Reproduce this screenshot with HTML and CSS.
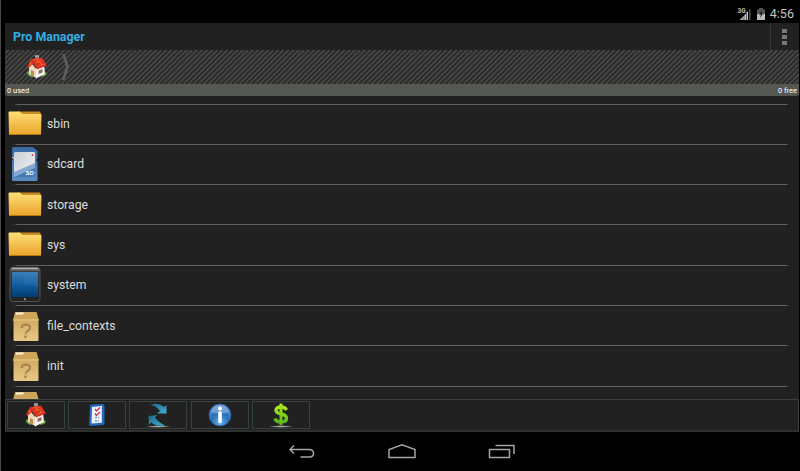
FILE: index.html
```html
<!DOCTYPE html>
<html lang="en">
<head>
<meta charset="utf-8">
<title>Pro Manager</title>
<link rel="stylesheet" href="styles.css">
</head>
<body>
<svg class="defs" aria-hidden="true">
  <defs>
    <linearGradient id="gFolder" x1="0" y1="0" x2="0" y2="1"><stop offset="0" stop-color="#ffdf78"/><stop offset="1" stop-color="#eba52b"/></linearGradient>
    <linearGradient id="gFrame" x1="0" y1="0" x2="0" y2="1"><stop offset="0" stop-color="#a8a8a8"/><stop offset=".12" stop-color="#3a3c3e"/><stop offset="1" stop-color="#222"/></linearGradient>
    <linearGradient id="gScreen" x1="0" y1="0" x2="0" y2="1"><stop offset="0" stop-color="#3b7fb9"/><stop offset=".6" stop-color="#0a5799"/><stop offset="1" stop-color="#043a70"/></linearGradient>
    <linearGradient id="gBox" x1="0" y1="0" x2="0" y2="1"><stop offset="0" stop-color="#d2ac60"/><stop offset="1" stop-color="#e6c886"/></linearGradient>
    <linearGradient id="gCard" x1="0" y1="0" x2="0" y2="1"><stop offset="0" stop-color="#3a6aa6"/><stop offset="1" stop-color="#5b8cc4"/></linearGradient>
    <linearGradient id="gLabel" x1="0" y1="0" x2="1" y2="1"><stop offset="0" stop-color="#c9d0d6"/><stop offset="1" stop-color="#f4f4f4"/></linearGradient>
    <linearGradient id="gSync" x1="0" y1="0" x2="1" y2="1"><stop offset="0" stop-color="#1c6688"/><stop offset="1" stop-color="#43aed6"/></linearGradient>
    <linearGradient id="gDollar" x1="0" y1="0" x2="0" y2="1"><stop offset="0" stop-color="#b0e81c"/><stop offset="1" stop-color="#57b81e"/></linearGradient>
    <radialGradient id="gInfo" cx=".5" cy=".85" r=".8"><stop offset="0" stop-color="#6ab4ee"/><stop offset=".5" stop-color="#2a6fba"/><stop offset="1" stop-color="#5b8ecb"/></radialGradient>
    <radialGradient id="gShade"><stop offset="0" stop-color="#b5b5b5"/><stop offset=".6" stop-color="#808080"/><stop offset="1" stop-color="#444" stop-opacity=".3"/></radialGradient>
  </defs>
  <symbol id="folder" viewBox="0 0 34 26">
    <path d="M12 1.500H32L33 4V25H1V3Z" fill="#c98c20"/>
    <path d="M.5 2.500Q.5 1.500 1.500 1.500H11.500L14.500 4H32.500Q33.500 4 33.500 5L33 24.500H1Z" fill="url(#gFolder)"/>
    <path d="M1 24.500H33" stroke="#b67813"/>
  </symbol>
  <symbol id="tablet" viewBox="0 0 32 35">
    <rect x="1" y=".5" width="30" height="34" rx="3" fill="url(#gFrame)" stroke="#555"/>
    <rect x="3" y="5" width="26" height="25" fill="url(#gScreen)"/>
    <path d="M17 5H29V19L14 18Z" fill="#4385ba" opacity=".22"/>
    <path d="M3 1.200H29" stroke="#bcbcbc"/>
    <circle cx="16" cy="32.200" r="1" fill="#b5b5b5"/>
  </symbol>
  <symbol id="box" viewBox="0 0 30 32">
    <path d="M4 14L0 23V27L4 30Z" fill="#171717"/>
    <path d="M5 2H26.500L28.800 10H3Z" fill="#cda55a"/>
    <path d="M3.500 9.500H28.500V30Q28.500 31 27.500 31H4.500Q3.500 31 3.500 30Z" fill="url(#gBox)"/>
    <path d="M5.500 4.500H13L14 2.500H6.300Z" fill="#fff4da"/>
    <path d="M3 10H29" stroke="#e9ca89"/>
    <path d="M11.500 18Q12 14.700 16 14.700Q20.500 14.700 20 18.200Q19.700 20 17.500 21Q16 21.800 15.800 24" fill="none" stroke="#a98853" stroke-width="2.200"/>
    <path d="M15.400 25.500V28" stroke="#a98853" stroke-width="2.400"/>
  </symbol>
  <symbol id="house" viewBox="0 0 22 26">
    <path d="M9 1.500H13V6H9Z" fill="#8b8d94"/><path d="M9 2H13" stroke="#b8b8bc"/>
    <path d="M1 18Q3 16 4 20L8 22 5 23Q1 21 1 19Z" fill="#68a43e"/>
    <path d="M17 19Q20 17 21 20L19 22L15 23Z" fill="#68a43e"/>
    <path d="M3 13L6 10L11 16V24.500L3 20Z" fill="#e9d7bf"/>
    <path d="M10 14L18 10L19 20L10 24.500Z" fill="#f5f3f2"/>
    <path d="M5 16L8 17.500V22.500L5 21Z" fill="#c08a48"/>
    <path d="M12.500 16.500L16.500 15V18.500L12.500 20Z" fill="#9c6a50"/>
    <path d="M5 5L16 3.500L21 11.500L11 15.500L7 9.500L2.500 14L1 12.500Z" fill="#d5301f"/>
    <path d="M7 6L15 5M9 9L17 7M12 12L19 10" stroke="#e84a2c" stroke-width="1.400"/>
    <path d="M11 5.500l2 3M15 9l1 2M5 8l-1 3" stroke="#f08a34"/>
  </symbol>
  <symbol id="checklist" viewBox="0 0 18 24">
    <path d="M2 3Q2 1.500 4 1.500L14 1Q16.500 1 16.500 3V20Q16.500 22 14 22L3 23Q1 23 1 21Z" fill="#2368bd"/>
    <path d="M4 4L13.800 3V19.700L3.500 20.500Z" fill="#edf2fb"/>
    <path d="M7 6l1.500 2L12 4.500M7 10.500L8.500 12.500L12 9" fill="none" stroke="#cf3344" stroke-width="1.400"/>
    <path d="M7 14.500H11M7 18H11" stroke="#7898c5" stroke-width="1.600" stroke-dasharray="2 1"/>
  </symbol>
  <symbol id="sync" viewBox="0 0 26 26">
    <ellipse cx="13" cy="24.500" rx="12" ry="1.300" fill="url(#gShade)"/>
    <path d="M5.500 3Q13-.5 19 5L21.500 3V11.500H12L15 9Q11.500 4 5.500 3Z" fill="url(#gSync)"/>
    <path d="M3.500 14L12.500 13L10 15.500Q13 20 20 23.500Q11 24.500 6 20.500L4 23Z" fill="url(#gSync)"/>
  </symbol>
  <symbol id="info" viewBox="0 0 24 24">
    <circle cx="12" cy="12" r="11" fill="url(#gInfo)" stroke="#2c5a9b" stroke-width=".8"/>
    <path d="M3 9Q5 2 12 2Q19 2 21 9Q12 12 3 9Z" fill="#9dbce3" opacity=".55"/>
    <circle cx="12" cy="5.500" r="2" fill="#fff"/><path d="M12 10V18.500" stroke="#fff" stroke-width="3.600" stroke-linecap="round"/>
  </symbol>
  <symbol id="dollar" viewBox="0 0 26 26">
    <ellipse cx="13" cy="24.500" rx="12" ry="1.300" fill="url(#gShade)"/>
    <path d="M18.500 8Q17 5 13 5Q8 5 8 8.300Q8 11 13 12Q18.500 13 18.500 16.500Q18.500 20 13 20Q8 20 7 16.500" fill="none" stroke="url(#gDollar)" stroke-width="3.400"/>
    <path d="M11.500 1.500h3v21.500h-3z" fill="url(#gDollar)"/>
  </symbol>
</svg>

<div class="device">
  <header class="status">
    <svg class="signal" width="16" height="14" viewBox="0 0 16 14"><text x="1.500" y="6" class="network">3G</text><path d="M3.500 13L10 6.500V13Z" fill="#b8b8b8"/><path d="M10.500 13V5.500L12 4V13Z" fill="#c8c8c8"/><path d="M13 13V3L14.500 1.500V13Z" fill="#565656"/><path d="M6 9V13M8 8V13" stroke="#000" stroke-width=".4"/></svg>
    <svg class="battery" width="8" height="12" viewBox="0 0 8 12"><path d="M2 0H6V1.500H8V12H0V1.500H2Z" fill="#555"/><path d="M0 6H8V12H0Z" fill="#bbb"/><path d="M5 2L2 6.500H4L3 10L6 5.500H4Z" fill="#111"/></svg>
    <span class="clock">4:56</span>
  </header>
  <main class="app">
    <div class="titlebar">
      <h1>Pro Manager</h1>
      <div class="more"><i></i><i></i><i></i></div>
    </div>
    <nav class="path">
      <svg width="22" height="26"><use href="#house"/></svg>
      <svg class="chevron" width="8" height="28" viewBox="0 0 8 28"><path d="M0 1H2.500L7 13.500L2.500 27H0L4 13.500Z" fill="#5e5e5e"/></svg>
    </nav>
    <div class="usage"><span>0 used</span><span>0 free</span></div>
    <ul class="files">
      <li><svg class="folder"><use href="#folder"/></svg><span>sbin</span></li>
      <li>
        <svg class="card" viewBox="0 0 28 34">
          <path d="M2 0H22L26.500 4V11L25.500 12V14L26.500 15V33Q26.500 34 25 34H2Q1 34 1 33V13L2 12V10L1 9V1Z" fill="url(#gCard)"/>
          <path d="M4 5H23Q24 5 24 6V30H3V6Z" fill="url(#gLabel)"/>
          <path d="M3 25L24 16V30H3Z" fill="#86a9d2"/>
          <path d="M3 30L24 21V30Z" fill="#4479b5"/>
          <path d="M21.500 7V9" stroke="#df4e48" stroke-width="1.500"/>
          <path d="M1 10l2 1.500" stroke="#fff"/>
          <text x="14.500" y="28" class="sd-text">SD</text>
        </svg>
        <span>sdcard</span>
      </li>
      <li><svg class="folder"><use href="#folder"/></svg><span>storage</span></li>
      <li><svg class="folder"><use href="#folder"/></svg><span>sys</span></li>
      <li><svg class="tablet"><use href="#tablet"/></svg><span>system</span></li>
      <li><svg class="box"><use href="#box"/></svg><span>file_contexts</span></li>
      <li><svg class="box"><use href="#box"/></svg><span>init</span></li>
      <li><svg class="box"><use href="#box"/></svg></li>
    </ul>
    <div class="toolbar">
      <div class="tool"><svg width="22" height="26"><use href="#house"/></svg></div>
      <div class="tool"><svg width="18" height="24"><use href="#checklist"/></svg></div>
      <div class="tool"><svg width="26" height="26"><use href="#sync"/></svg></div>
      <div class="tool"><svg width="24" height="24"><use href="#info"/></svg></div>
      <div class="tool"><svg width="26" height="26"><use href="#dollar"/></svg></div>
    </div>
  </main>
  <footer class="system">
    <svg width="28" height="16" viewBox="0 0 28 16"><path d="M6 1.500L2 5.500L6 9.500M2 5.500H21Q25.500 5.500 25.500 9.500Q25.500 13 21 13H12.500" /></svg>
    <svg width="28" height="16" viewBox="0 0 28 16"><path d="M1 13.500V5.500L14 .9L27 5.500V13.500Z"/></svg>
    <svg width="28" height="16" viewBox="0 0 28 16"><path d="M1.500 5.500H21.500V13.500H1.500ZM7.500 1.500H26V10"/></svg>
  </footer>
</div>
</body>
</html>
```
FILE: styles.css
```css
* { box-sizing: border-box; }
body { margin: 0; background: #000; font-family: Roboto, sans-serif; color: #ddd; }
.defs { position: absolute; width: 0; height: 0; }
.sd-text { font: italic bold 6px "Liberation Sans", sans-serif; fill: #fff; }
.network { font: bold 6.5px Roboto, sans-serif; fill: #bbb; }

.device { width: 800px; height: 471px; display: flex; flex-direction: column; border-left: 1px solid #484848; padding: 0 1px 0 4px; overflow: hidden; }
.device svg { display: block; flex: none; }

.status { height: 23px; display: flex; align-items: center; justify-content: flex-end; padding: 4px 5px 0 0; }
.battery { margin: 0 5px 0 4px; }
.signal { margin-right: 1px; }
.clock { font-size: 12.6px; line-height: 15px; color: #c4c4c4; }

.app { height: 409px; display: flex; flex-direction: column; background: #212121; }
.titlebar { height: 27px; display: flex; align-items: center; justify-content: space-between; padding-left: 8px; }
h1 { margin: 0; font-size: 12.4px; line-height: 16px; font-weight: 700; color: #33aee0; }
.more { width: 29px; height: 27px; border-left: 1px solid #303838; display: flex; flex-direction: column; align-items: center; justify-content: center; gap: 2px; padding: 1px 1px 0 0; }
.more i { width: 5px; height: 4px; background: #777; }

.path { height: 34px; display: flex; align-items: center; padding-left: 21px; background: repeating-linear-gradient(135deg, #2c2c2c 0 1.5px, #484848 2.1px 3px, #2c2c2c 3.6px); }
.chevron { margin-left: 14px; }
.usage { height: 12px; display: flex; justify-content: space-between; padding: 0 2px; background: #555753; border-radius: 0 0 3px 3px; font-size: 7.5px; line-height: 13px; color: #fff; }

.files { list-style: none; margin: 0; padding: 7.5px 0 0; height: 303px; overflow: hidden; }
.files li { height: 40.3px; display: flex; align-items: center; background: linear-gradient(90deg, transparent 6px, #3a3a3a 11px, #606060 12px, #606060 782px, transparent 783px) top / 100% 1px no-repeat; }
.files span { font-size: 12.2px; line-height: 16px; padding-top: 1px; color: #ddd; }
.folder { width: 34px; height: 26px; margin: 0 5px 1px 3px; }
.card { width: 28px; height: 34px; margin: 0 8px 0 6px; }
.tablet { width: 32px; height: 35px; margin: 0 6px 0 4px; }
.box { width: 30px; height: 32px; margin: 1px 7px 0 5px; }

.toolbar { height: 33px; display: flex; gap: 3.2px; padding: 1px; border: 1px solid #3d3f3e; border-bottom-width: 2px; border-bottom-color: #303030; }
.tool { width: 58px; height: 28px; display: flex; align-items: center; justify-content: center; border: 1px solid #354240; }

.system { height: 39px; display: flex; justify-content: center; gap: 72px; padding: 12px 0 0 0; }
.system path { fill: none; stroke: #a5a5a5; stroke-width: 1.5; }
```
